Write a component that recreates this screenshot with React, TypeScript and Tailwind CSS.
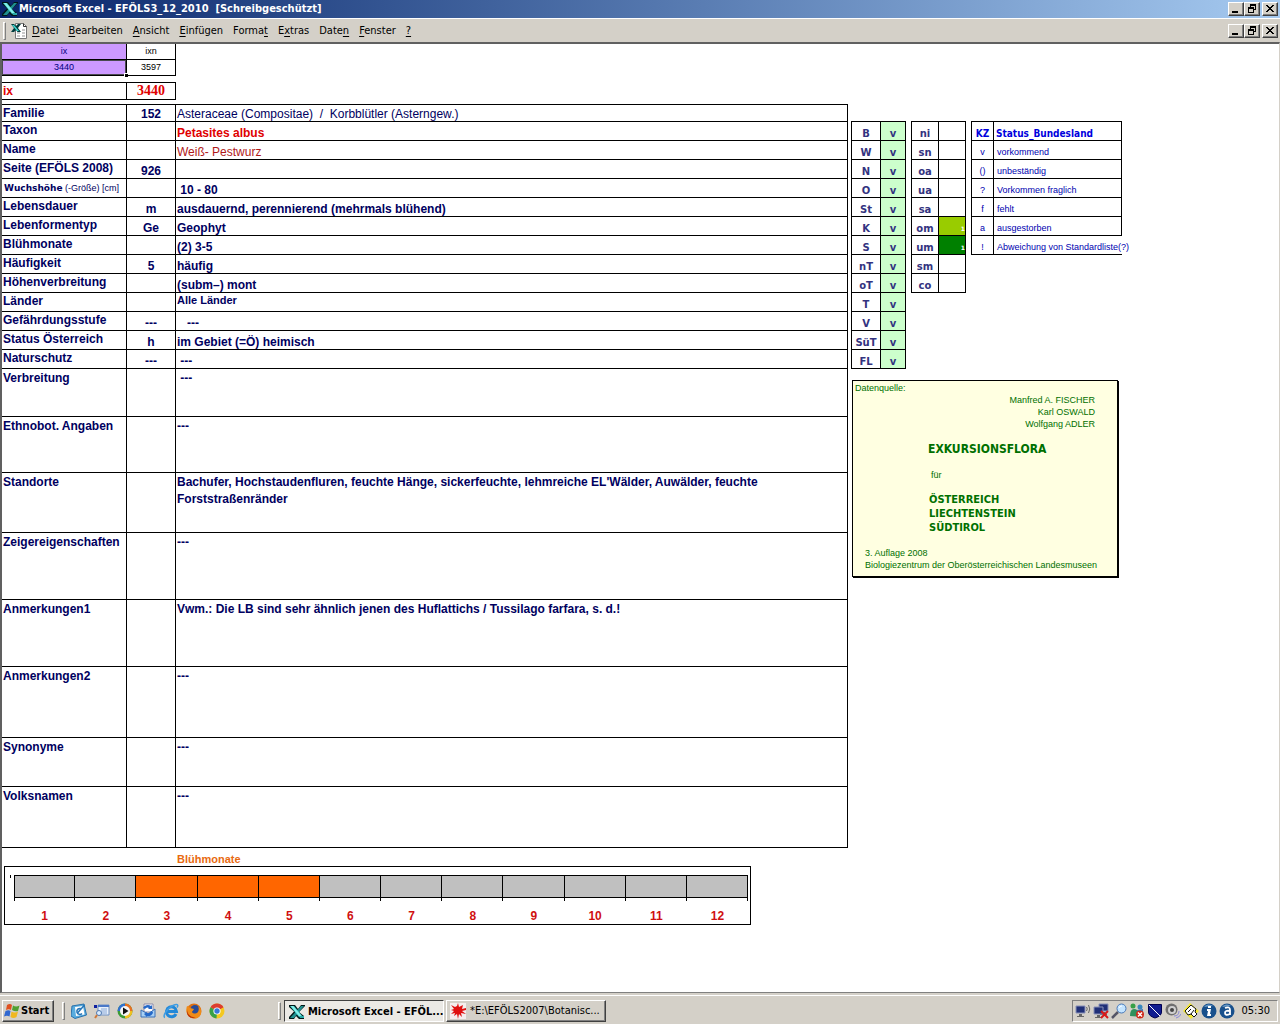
import type { ReactNode } from "react";

const UI = "font-['DejaVu_Sans_Condensed','DejaVu_Sans',sans-serif]";
const RAISED =
  "border border-t-white border-l-white border-r-[#404040] border-b-[#404040] shadow-[inset_-1px_-1px_0_#808080]";

function ExcelMark({ className }: { className?: string }) {
  return (
    <svg viewBox="0 0 16 16" className={className} aria-hidden="true">
      <path d="M0 1h6l3 4 3-4h4v1l-6 6 5 4v3h-5l-3-3-2 3H0v-2l5-5.500L0 3z" fill="#001818" />
      <path d="M12 2h3L5 14H1z" fill="#1f8f8f" />
      <path d="M1 2h4l9 11h-4z" fill="#4fd8d4" />
      <path d="M2 2h2l9 11h-2z" fill="#b0fffa" opacity=".6" />
      <path d="M10 12h5v2h-4z" fill="#2aa8a8" />
    </svg>
  );
}

function SheetDoc() {
  return (
    <svg viewBox="0 0 16 16" className="h-4 w-4" aria-hidden="true">
      <path d="M4.500.5h8l3 3v12h-11z" fill="#fff" stroke="#777" />
      <path d="M12.500.5v3h3" fill="none" stroke="#333" />
      <path d="M6 9h3v2H6zM11 9h3v2h-3zM6 12h3v2H6zM11 12h3v2h-3zM11 6h3v2h-3z" fill="#c9c9c9" />
      <path d="M0 1h3l2 2 2-2h3L7 5l3 4H6.500L5 7 3 9H0l3-4z" fill="#003c3c" />
      <path d="M1 2h2l5 6H6z" fill="#40d8d0" />
    </svg>
  );
}

function WindowButtons() {
  const cls = `flex h-[14px] w-4 items-center justify-center bg-[#d4d0c8] ${RAISED}`;
  return (
    <div className="flex">
      <button type="button" aria-label="Minimieren" className={cls}>
        <svg viewBox="0 0 12 10" className="h-[10px] w-3"><path d="M2 7h6v2H2z" /></svg>
      </button>
      <button type="button" aria-label="Wiederherstellen" className={cls}>
        <svg viewBox="0 0 12 10" className="h-[10px] w-3" shapeRendering="crispEdges">
          <path d="M4 0h6v6H8V5h1V2H5v1H4zM2 3h6v6H2zM3 5v3h4V5z" fillRule="evenodd" />
        </svg>
      </button>
      <button type="button" aria-label="Schließen" className={`${cls} ml-[2px]`}>
        <svg viewBox="0 0 12 10" className="h-[10px] w-3" shapeRendering="crispEdges">
          <path d="M2 1h2v1h1v1h2V2h1V1h2v1H9v1H8v1H7v1h1v1h1v1h1v1H8V7H7V6H5v1H4v1H2V7h1V6h1V5h1V4H4V3H3V2H2z" />
        </svg>
      </button>
    </div>
  );
}

const MENU: [string, string, string][] = [
  ["", "D", "atei"],
  ["", "B", "earbeiten"],
  ["", "A", "nsicht"],
  ["", "E", "infügen"],
  ["Forma", "t", ""],
  ["E", "x", "tras"],
  ["Date", "n", ""],
  ["", "F", "enster"],
  ["", "?", ""],
];

type Row = { label: ReactNode; code?: string; value?: string; h: string; tone?: string; tall?: boolean; top?: boolean };

const ROWS: Row[] = [
  { label: "Familie", code: "152", value: "Asteraceae (Compositae)  /  Korbblütler (Asterngew.)", h: "h-[17px]", tone: "font-normal" },
  { label: "Taxon", value: "Petasites albus", h: "h-[19px]", tone: "text-[#e00000]" },
  { label: "Name", value: "Weiß- Pestwurz", h: "h-[19px]", tone: "font-normal text-[#b01818]" },
  { label: "Seite (EFÖLS 2008)", code: "926", h: "h-[19px]" },
  {
    label: (
      <span className="ml-px text-[9px]">
        <b className="font-['DejaVu_Sans',sans-serif]">Wuchshöhe</b>{" "}
        <span className="font-normal">(-Größe) [cm]</span>
      </span>
    ),
    value: " 10 - 80",
    h: "h-[19px]",
  },
  { label: "Lebensdauer", code: "m", value: "ausdauernd, perennierend (mehrmals blühend)", h: "h-[19px]" },
  { label: "Lebenformentyp", code: "Ge", value: "Geophyt", h: "h-[19px]" },
  { label: "Blühmonate", value: "(2) 3-5", h: "h-[19px]" },
  { label: "Häufigkeit", code: "5", value: "häufig", h: "h-[19px]" },
  { label: "Höhenverbreitung", value: "(subm–) mont", h: "h-[19px]" },
  { label: "Länder", value: "Alle Länder", h: "h-[19px]", tone: "text-[11px]", top: true },
  { label: "Gefährdungsstufe", code: "---", value: "   ---", h: "h-[19px]" },
  { label: "Status Österreich", code: "h", value: "im Gebiet (=Ö) heimisch", h: "h-[19px]" },
  { label: "Naturschutz", code: "---", value: " ---", h: "h-[19px]" },
  { label: "Verbreitung", value: " ---", h: "h-[48px]", tall: true },
  { label: "Ethnobot. Angaben", value: "---", h: "h-[56px]", tall: true },
  {
    label: "Standorte",
    value: "Bachufer, Hochstaudenfluren, feuchte Hänge, sickerfeuchte, lehmreiche EL'Wälder, Auwälder, feuchte Forststraßenränder",
    h: "h-[60px]",
    tall: true,
  },
  { label: "Zeigereigenschaften", value: "---", h: "h-[67px]", tall: true },
  { label: "Anmerkungen1", value: "Vwm.: Die LB sind sehr ähnlich jenen des Huflattichs / Tussilago farfara, s. d.!", h: "h-[67px]", tall: true },
  { label: "Anmerkungen2", value: "---", h: "h-[71px]", tall: true },
  { label: "Synonyme", value: "---", h: "h-[49px]", tall: true },
  { label: "Volksnamen", value: "---", h: "h-[61px]", tall: true },
];

function SpeciesTable() {
  return (
    <table className="w-full table-fixed border-separate border-spacing-0 border-t border-black text-[12px] font-bold text-[#000060]">
      <colgroup>
        <col className="w-[125px]" />
        <col className="w-[49px]" />
        <col />
      </colgroup>
      <tbody>
        {ROWS.map((r, i) => (
          <tr key={i} className={r.h}>
            <th scope="row" className={`whitespace-nowrap border-r border-b border-black p-0 pl-px text-left align-top ${r.tall ? "leading-[18px]" : "leading-4"}`}>
              {r.label}
            </th>
            <td className="border-r border-b border-black p-0 text-center align-bottom leading-[14px]">{r.code}</td>
            <td
              className={`whitespace-pre-wrap border-r border-b border-black p-0 pr-16 pl-px ${
                r.tall ? "pt-px align-top leading-[17px]" : r.top ? "align-top leading-[15px]" : "align-bottom leading-[14px]"
              } ${r.tone ?? ""}`}
            >
              {r.value}
            </td>
          </tr>
        ))}
      </tbody>
    </table>
  );
}

const REGIONS = ["B", "W", "N", "O", "St", "K", "S", "nT", "oT", "T", "V", "SüT", "FL"];
const ZONES = ["ni", "sn", "oa", "ua", "sa", "om", "um", "sm", "co"];
const LEGEND = [
  ["v", "vorkommend"],
  ["()", "unbeständig"],
  ["?", "Vorkommen fraglich"],
  ["f", "fehlt"],
  ["a", "ausgestorben"],
];

const GRID = "border-separate border-spacing-0 border-t border-l border-black";
const CELL = "h-[19px] border-r border-b border-black p-0 pt-[5px] leading-[13px] whitespace-nowrap";

function SideTables() {
  return (
    <div className="flex items-start gap-[5px] font-['DejaVu_Sans',sans-serif] text-[10px]">
      <table className={`${GRID} w-[55px] shrink-0 table-fixed font-bold text-[#333380]`}>
        <tbody>
          {REGIONS.map((r) => (
            <tr key={r}>
              <th scope="row" className={`${CELL} w-[29px]`}>{r}</th>
              <td className={`${CELL} bg-[#ccffcc] text-center`}>v</td>
            </tr>
          ))}
        </tbody>
      </table>
      <table className={`${GRID} w-[55px] shrink-0 table-fixed font-bold text-[#333380]`}>
        <tbody>
          {ZONES.map((z) => (
            <tr key={z}>
              <th scope="row" className={`${CELL} w-[27px]`}>{z}</th>
              <td className={`${CELL} text-right text-[6px] text-white ${z === "om" ? "bg-[#99cc00]" : z === "um" ? "bg-[#008000]" : ""}`}>
                {z === "om" || z === "um" ? "1" : ""}
              </td>
            </tr>
          ))}
        </tbody>
      </table>
      <table className={`${GRID} w-[151px] shrink-0 table-fixed font-['Liberation_Sans',sans-serif] text-[9px] text-[#0000b0]`}>
        <thead>
          <tr className="font-['DejaVu_Sans_Condensed','DejaVu_Sans',sans-serif] text-[10px] text-[#0000dd]">
            <th scope="col" className={`${CELL} w-[22px]`}>KZ</th>
            <th scope="col" className={`${CELL} pl-[2px] text-left`}>Status_Bundesland</th>
          </tr>
        </thead>
        <tbody>
          {LEGEND.map(([k, t]) => (
            <tr key={k}>
              <td className={`${CELL} text-center`}>{k}</td>
              <td className={`${CELL} pl-[3px]`}>{t}</td>
            </tr>
          ))}
          <tr>
            <td className={`${CELL} text-center`}>!</td>
            <td className="h-[19px] border-b border-black p-0 pt-[5px] pl-[3px] leading-[13px] whitespace-nowrap">
              Abweichung von Standardliste(?)
            </td>
          </tr>
        </tbody>
      </table>
    </div>
  );
}

function SourceBox() {
  return (
    <section className="mt-[11px] ml-px flex min-h-[197px] w-[266px] flex-col border border-black bg-[#ffffe1] pt-px font-['Liberation_Sans',sans-serif] text-[9px] leading-3 text-[#007000] shadow-[1px_1px_0_#000]">
      <p className="pl-[2px]">Datenquelle:</p>
      <div className="pr-[22px] text-right">
        <p>Manfred A. FISCHER</p>
        <p>Karl OSWALD</p>
        <p>Wolfgang ADLER</p>
      </div>
      <h2 className="mt-[11px] pl-[75px] text-[12px] leading-4 font-bold font-['DejaVu_Sans_Condensed','DejaVu_Sans',sans-serif]">EXKURSIONSFLORA</h2>
      <p className="mt-3 pl-[78px]">für</p>
      <div className="mt-3 pl-[76px] text-[11px] leading-[14px] font-bold font-['DejaVu_Sans_Condensed','DejaVu_Sans',sans-serif]">
        <p>ÖSTERREICH</p>
        <p>LIECHTENSTEIN</p>
        <p>SÜDTIROL</p>
      </div>
      <div className="mt-3 pl-3 whitespace-nowrap">
        <p>3. Auflage 2008</p>
        <p>Biologiezentrum der Oberösterreichischen Landesmuseen</p>
      </div>
    </section>
  );
}

function BloomChart() {
  const months = Array.from({ length: 12 }, (_, i) => i + 1);
  return (
    <figure className="mr-[97px] ml-[2px]">
      <figcaption className="ml-[173px] h-[18px] pt-1 text-[11px] leading-[14px] font-bold text-[#e86a10]">Blühmonate</figcaption>
      <div className="flex h-[59px] border border-black pt-2 pr-[2px] pl-[5px]">
        <span className="mr-[3px] h-[3px] w-px shrink-0 bg-black" />
        <div className="grid flex-1 grid-cols-12 text-center text-[12px] leading-[14px] font-bold text-[#d01010]">
          {months.map((m) => (
            <div key={m}>
              <div
                className={`h-[23px] border-y border-r border-black ${m === 1 ? "border-l" : ""} ${
                  m >= 3 && m <= 5 ? "bg-[#ff6600]" : "bg-[#c0c0c0]"
                }`}
              />
              <div className={`mb-2 h-[3px] border-r border-black ${m === 1 ? "border-l" : ""}`} />
              {m}
            </div>
          ))}
        </div>
      </div>
    </figure>
  );
}

function Ico({ children }: { children: ReactNode }) {
  return (
    <svg viewBox="0 0 16 16" className="h-4 w-4 shrink-0" aria-hidden="true">
      {children}
    </svg>
  );
}

const LAUNCH: { name: string; art: ReactNode }[] = [
  {
    name: "Desktop anzeigen",
    art: (
      <>
        <path d="M1 3l12-2 2.500 11L4 15.500 0 13z" fill="#58acdf" stroke="#2a72ac" />
        <path d="M4 4l8-1 1.500 8.500L5 13z" fill="#fff" />
        <path d="M9.500 5.500a3 3 0 1 0 1.500 5M6.500 10l7-8" fill="none" stroke="#2676b8" strokeWidth="1.500" />
      </>
    ),
  },
  {
    name: "Suche",
    art: (
      <>
        <path d="M4 2h11v10H4z" fill="#e8f0fa" stroke="#6d8fc4" />
        <path d="M4 2h11v2H4z" fill="#4a78c8" />
        <path d="M7 6h6M7 8h6M7 10h6" stroke="#88a8d8" />
        <path d="M0 2h3v3H0z" fill="#1020a0" />
        <circle cx="5" cy="10" r="2.500" fill="#d8ecff" stroke="#5078b0" />
        <path d="M3 12l-2 3" stroke="#d07838" strokeWidth="2" />
      </>
    ),
  },
  {
    name: "Media Player",
    art: (
      <>
        <circle cx="8" cy="8" r="7.500" fill="#3c9c38" />
        <path d="M8 8V.5A7.500 7.500 0 0 0 .5 8z" fill="#3070d0" />
        <path d="M8 8V.5A7.500 7.500 0 0 1 15.500 8z" fill="#e87020" />
        <path d="M8 8h7.500A7.500 7.500 0 0 1 8 15.500z" fill="#f0c020" />
        <circle cx="8" cy="8" r="5" fill="#f6f6f6" />
        <path d="M6 4.500v7L11.500 8z" fill="#111" />
      </>
    ),
  },
  {
    name: "Outlook Express",
    art: (
      <>
        <path d="M4 1h9v8H4z" fill="#fff" stroke="#88a" />
        <path d="M1 7l7 4 7-5v8H1z" fill="#a8d0f4" stroke="#3a70b8" />
        <path d="M3 5a5 4 0 0 1 8-2l1-1v4H8l1-1a3 3 0 0 0-4 1z" fill="#2468c8" />
        <path d="M13 9a5 4 0 0 1-6 4v1l-3-3 3-2v1a3 3 0 0 0 4-2z" fill="#2468c8" />
      </>
    ),
  },
  {
    name: "Internet Explorer",
    art: (
      <>
        <path d="M13 11a5 5 0 1 1 .5-2.500H5" fill="none" stroke="#2288d8" strokeWidth="3" />
        <path d="M2 14.500c-3-1 2-9 8-12 4-2 6-1 4 2" fill="none" stroke="#3c9ce4" strokeWidth="1.500" />
      </>
    ),
  },
  {
    name: "Firefox",
    art: (
      <>
        <circle cx="8" cy="8" r="7.500" fill="#e07010" />
        <circle cx="9" cy="6.500" r="4.500" fill="#284c98" />
        <path d="M1 3c1 0 2 1 3 2l4 1c-1 2-2 2-2 3 1 2 4 2 6 0 1-2 1-4 0-6 4 3 4 8 1 11-4 3-9 1-11-2-2-3-2-6-1-9z" fill="#f08c18" />
        <path d="M1 6c0 6 5 9 9 8-3 2-8 1-9-4z" fill="#b83008" />
      </>
    ),
  },
  {
    name: "Chrome",
    art: (
      <>
        <circle cx="8" cy="8" r="7.500" fill="#f4c820" />
        <path d="M8 8L1.500 4.200A7.500 7.500 0 0 1 14.500 4.200z" fill="#dc3c30" />
        <path d="M8 8L1.500 4.200A7.500 7.500 0 0 0 7.500 15.500z" fill="#38a048" />
        <circle cx="8" cy="8" r="3.600" fill="#fff" />
        <circle cx="8" cy="8" r="2.700" fill="#3878d8" />
      </>
    ),
  },
];

function Monitor({ x = 0, y = 0 }: { x?: number; y?: number }) {
  return (
    <g transform={`translate(${x} ${y})`}>
      <path d="M1 2h9v7H1z" fill="#203078" stroke="#8890b8" />
      <path d="M4 10h3v2H4zM2 12h7v1H2z" fill="#666" />
    </g>
  );
}

const TRAY: ReactNode[] = [
  <>
    <Monitor y={1} />
    <path d="M11.500 4q1.500 2 0 4M13.500 2q2.500 4 0 8" fill="none" stroke="#666" />
  </>,
  <>
    <Monitor x={5} y={-1} />
    <Monitor y={2} />
    <path d="M8 8l7 7M15 8l-7 7" stroke="#d81818" strokeWidth="2" />
  </>,
  <>
    <path d="M7 9l-6 6" stroke="#556" strokeWidth="2.500" />
    <circle cx="10.500" cy="5.500" r="4.500" fill="#c4e4ff" stroke="#4878b8" />
    <path d="M8 5a3 3 0 0 1 3-2" stroke="#fff" fill="none" />
  </>,
  <>
    <circle cx="4" cy="3" r="2.500" fill="#38a048" />
    <circle cx="11" cy="4" r="2.500" fill="#3888c0" />
    <path d="M1 13q0-7 4-7t4 4l5-3v7z" fill="#30905c" />
    <path d="M8 7l6-1v7H8z" fill="#3c78b8" />
    <circle cx="11" cy="11.500" r="4" fill="#d02818" />
    <path d="M9 9.500l4 4M13 9.500l-4 4" stroke="#fff" strokeWidth="1.500" />
  </>,
  <>
    <path d="M1.500 1.500h13V9q0 4-6.500 6-6.500-2-6.500-6z" fill="#101c90" stroke="#000050" />
    <path d="M2 2l11 11" stroke="#fff" />
  </>,
  <>
    <circle cx="6.500" cy="6.500" r="6" fill="#707070" />
    <circle cx="7" cy="7" r="4" fill="#d0d0d0" />
    <circle cx="7" cy="7" r="2" fill="#444" />
    <path d="M9 13q5 0 5-5M11 15q4-1 5-4" fill="none" stroke="#8888d8" />
  </>,
  <>
    <path d="M7 0l9 8-8 8-8-8z" fill="#f4e830" />
    <path d="M2 8l6-6 5 4-1 3 2 2-3 3-3-3-3 1z" fill="#fff" stroke="#111" />
    <path d="M5 9l3-3M8 11l3-4" stroke="#111" />
  </>,
  <>
    <circle cx="8" cy="8" r="7.500" fill="#18508c" />
    <path d="M3 4a6 6 0 0 1 9-1z" fill="#6898c4" />
    <path d="M7 3h3v2H7zM6 6h4l-1 5h1v2H6l1-5H6z" fill="#fff" />
  </>,
  <>
    <circle cx="8" cy="8" r="7.500" fill="#18508c" />
    <path d="M3 4a6 6 0 0 1 9-1z" fill="#6898c4" />
    <path d="M6 5q5-2 5 2v5M11 8q-5-1-5 2t5 1" fill="none" stroke="#fff" strokeWidth="1.800" />
  </>,
];

function Grip() {
  return <span className="h-[18px] w-[3px] shrink-0 border border-t-white border-r-[#808080] border-b-[#808080] border-l-white" />;
}

function Taskbar() {
  return (
    <footer className={`flex h-[29px] shrink-0 items-center border-t border-white bg-[#d4d0c8] px-[2px] pt-[2px] text-[11px] ${UI}`}>
      <button type="button" className={`flex h-[22px] w-[52px] items-center gap-px bg-[#d4d0c8] pl-px font-bold ${RAISED}`}>
        <Ico>
          <path d="M3 2q3-2 5 0L7 7Q5 5.500 2 7z" fill="#e05020" />
          <path d="M9 2.500q3 2 6.500 0L14 8q-3 1-6-1z" fill="#50a030" />
          <path d="M1.500 8q3-1.500 5 0l-1 5.500Q3 12 0 13.500z" fill="#3068d0" />
          <path d="M7.500 8.500q3 2 6.500 0L12.500 14q-3 2-6 0z" fill="#f0b820" />
        </Ico>
        Start
      </button>
      <div className="ml-2 flex w-[216px] items-center">
        <Grip />
        <div className="ml-[6px] flex gap-[7px]">
          {LAUNCH.map((l) => (
            <button key={l.name} type="button" aria-label={l.name}>
              <Ico>{l.art}</Ico>
            </button>
          ))}
        </div>
      </div>
      <Grip />
      <div className="ml-[3px] flex flex-1 gap-[2px]">
        <button
          type="button"
          aria-pressed="true"
          className="flex h-[22px] w-[160px] items-center gap-[3px] border border-t-[#404040] border-r-white border-b-white border-l-[#404040] bg-[#ebe9e5] pt-[2px] pl-1 font-bold whitespace-nowrap"
        >
          <ExcelMark className="h-4 w-4 shrink-0" />
          Microsoft Excel - EFÖL...
        </button>
        <button type="button" className={`flex h-[22px] w-[160px] items-center gap-1 bg-[#d4d0c8] pl-[3px] whitespace-nowrap ${RAISED}`}>
          <Ico>
            <path d="M0 0h16v16H0z" fill="#f4eeee" />
            <path d="M3 0l2 4 2-1 1-3 1 4 4-2-1 4 4-1v2l-4 1 4 3-5-1 1 4-3-3-1 5-1-5-3 2 1-3-4 1 3-3-3-1 3-1-3-4 4 2z" fill="#e01010" />
            <path d="M6 4h4l2 3-2 4H6L4 8z" fill="#e01010" />
          </Ico>
          *E:\EFÖLS2007\Botanisc...
        </button>
      </div>
      <div className="flex h-[22px] items-center gap-[2px] border border-t-[#808080] border-r-white border-b-white border-l-[#808080] pr-[7px] pl-[2px]">
        {TRAY.map((t, i) => (
          <Ico key={i}>{t}</Ico>
        ))}
        <time className="ml-1">05:30</time>
      </div>
    </footer>
  );
}

export default function App() {
  return (
    <div className="flex min-h-screen flex-col bg-[#d4d0c8] font-['Liberation_Sans',sans-serif] text-black">
      <header className={UI}>
        <div className="flex h-[18px] items-center bg-gradient-to-r from-[#0a246a] to-[#a6caf0] pr-[2px] pl-[2px]">
          <ExcelMark className="h-4 w-4" />
          <h1 className="ml-px flex-1 pt-px text-[11px] font-bold whitespace-pre text-white">Microsoft Excel - EFÖLS3_12_2010  [Schreibgeschützt]</h1>
          <WindowButtons />
        </div>
        <div className="flex h-6 items-center border-t border-white pr-[2px] pl-[3px]">
          <Grip />
          <span className="ml-[5px]"><SheetDoc /></span>
          <nav className="ml-[5px] flex flex-1 gap-[10px] pt-[2px] text-[11px]">
            {MENU.map(([a, u, b]) => (
              <button key={a + u + b} type="button">
                {a}
                <span className="underline underline-offset-2">{u}</span>
                {b}
              </button>
            ))}
          </nav>
          <WindowButtons />
        </div>
      </header>

      <main className="flex-1 border-t-2 border-r border-b border-l-2 border-t-[#606060] border-r-[#d4d0c8] border-b-[#808080] border-l-[#606060] bg-white">
        <table className="w-[174px] table-fixed border-separate border-spacing-0 text-center text-[9px] leading-[13px]">
          <tbody>
            <tr className="h-4">
              <td className="w-[125px] border-r border-b border-black bg-[#cc99ff] p-0 text-[#000080]">ix</td>
              <td className="border-r border-b border-black p-0">ixn</td>
            </tr>
            <tr className="h-4">
              <td className="relative border-r border-b border-black bg-[#cc99ff] p-0 text-[#000080] shadow-[inset_0_0_0_1px_#4a4a50]">
                3440
                <span className="absolute -right-[2px] -bottom-[2px] h-1 w-1 border-t border-l border-white bg-black" />
              </td>
              <td className="border-r border-b border-black p-0">3597</td>
            </tr>
          </tbody>
        </table>
        <table className="mt-[6px] w-[174px] table-fixed border-separate border-spacing-0 border-t border-black font-bold text-[#e00000]">
          <tbody>
            <tr className="h-[17px]">
              <th scope="row" className="w-[125px] border-r border-b border-black p-0 pl-px text-left text-[12px] leading-4">ix</th>
              <td className="border-r border-b border-black p-0 text-center font-['Liberation_Serif',serif] text-[14px] leading-4">3440</td>
            </tr>
          </tbody>
        </table>
        <div className="mt-1 grid grid-cols-[minmax(0,1fr)_431px] items-start">
          <div>
            <SpeciesTable />
            <BloomChart />
          </div>
          <aside className="mt-[17px] pl-[3px]">
            <SideTables />
            <SourceBox />
          </aside>
        </div>
      </main>
      <div className="h-[2px] bg-[#d4d0c8]" />
      <Taskbar />
    </div>
  );
}
